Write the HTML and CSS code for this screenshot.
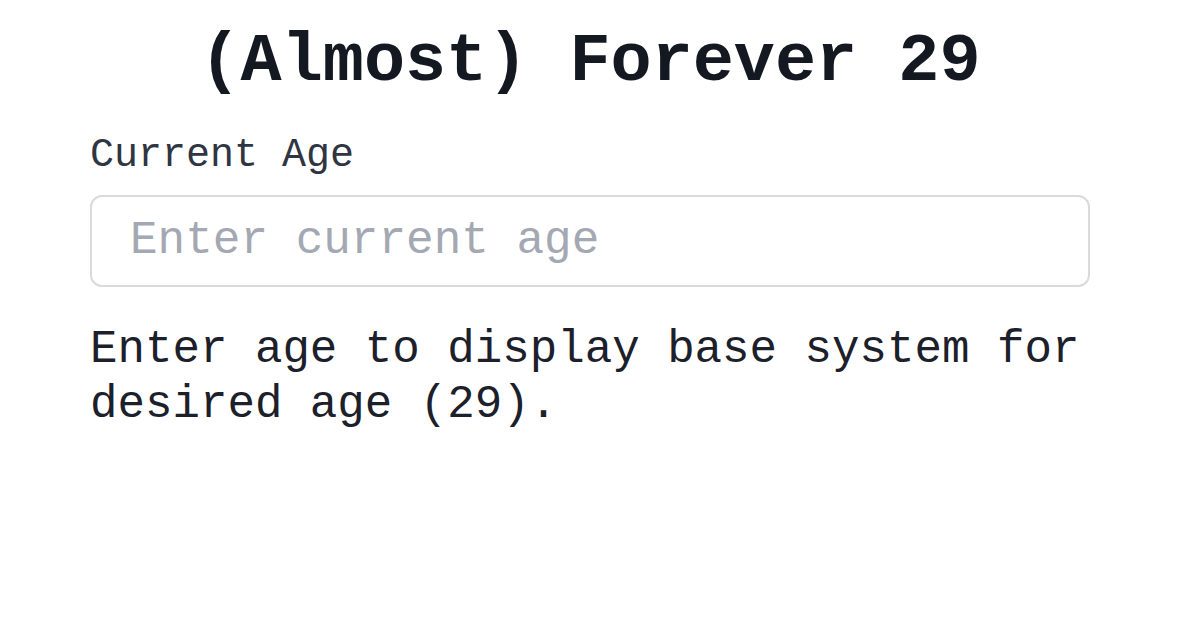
FILE: index.html
```html
<!DOCTYPE html>
<html lang="en">
<head>
<meta charset="utf-8">
<title>(Almost) Forever 29</title>
<link rel="stylesheet" href="styles.css">
</head>
<body>
<main class="page">
  <h1 class="title">(Almost) Forever 29</h1>
  <label class="label" for="age">Current Age</label>
  <input class="age-input" id="age" type="text" placeholder="Enter current age">
  <p class="desc">Enter age to display base system for desired age (29).</p>
</main>
</body>
</html>
```
FILE: styles.css
```css
html, body {
  margin: 0;
  padding: 0;
  background: #ffffff;
}
body {
  font-family: "Liberation Mono", "DejaVu Sans Mono", monospace;
  color: #1f2430;
}
.page {
  width: 1000px;
  margin-left: 90px;
  padding-top: 23px;
  display: flex;
  flex-direction: column;
}
.title {
  margin: 0;
  font-size: 68.5px;
  line-height: 78px;
  font-weight: 700;
  text-align: center;
  color: #141821;
}
.label {
  margin-top: 31px;
  font-size: 40px;
  line-height: 48px;
  color: #2f3542;
}
.age-input {
  margin-top: 15px;
  box-sizing: border-box;
  width: 1000px;
  height: 92px;
  padding: 0 38px;
  border: 2px solid #d8dae0;
  border-radius: 12px;
  font-family: "Liberation Mono", "DejaVu Sans Mono", monospace;
  font-size: 46px;
  color: #1f2430;
  outline: none;
  background: #fff;
}
.age-input::placeholder {
  color: #a3a8b3;
}
.desc {
  margin: 36px 0 0;
  font-size: 45.8px;
  line-height: 55px;
  color: #1c202a;
}
```
